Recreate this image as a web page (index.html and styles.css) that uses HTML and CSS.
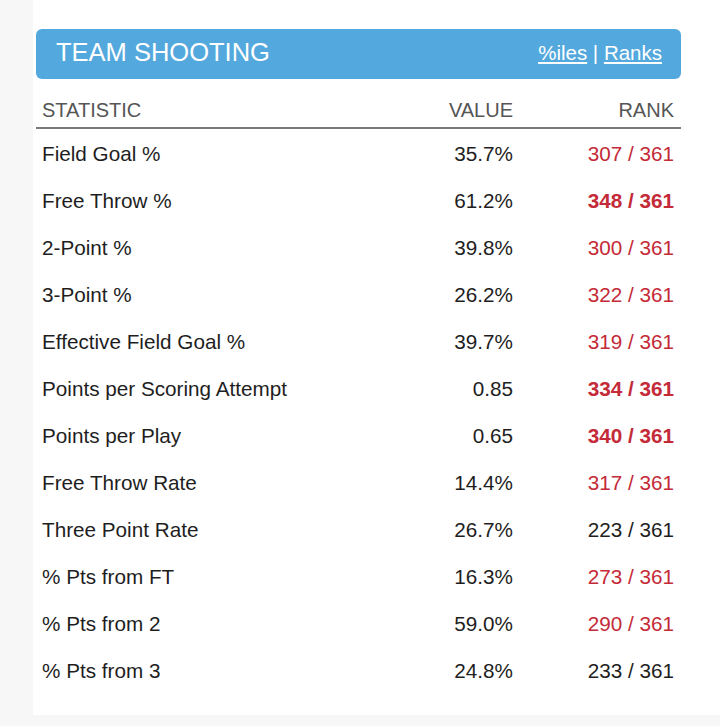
FILE: index.html
```html
<!DOCTYPE html>
<html>
<head>
<meta charset="utf-8">
<link rel="stylesheet" href="styles.css">
</head>
<body>
<div class="page">
  <div class="card">
    <div class="bar">
      <span class="title">TEAM SHOOTING</span>
      <span class="links"><a href="#">%iles</a> | <a href="#">Ranks</a></span>
    </div>
    <div class="table">
      <div class="row head">
        <div class="c stat">STATISTIC</div>
        <div class="c num">VALUE</div>
        <div class="c num">RANK</div>
      </div>
      <div class="row"><div class="c stat">Field Goal %</div><div class="c num">35.7%</div><div class="c num red">307 / 361</div></div>
      <div class="row"><div class="c stat">Free Throw %</div><div class="c num">61.2%</div><div class="c num red bold">348 / 361</div></div>
      <div class="row"><div class="c stat">2-Point %</div><div class="c num">39.8%</div><div class="c num red">300 / 361</div></div>
      <div class="row"><div class="c stat">3-Point %</div><div class="c num">26.2%</div><div class="c num red">322 / 361</div></div>
      <div class="row"><div class="c stat">Effective Field Goal %</div><div class="c num">39.7%</div><div class="c num red">319 / 361</div></div>
      <div class="row"><div class="c stat">Points per Scoring Attempt</div><div class="c num">0.85</div><div class="c num red bold">334 / 361</div></div>
      <div class="row"><div class="c stat">Points per Play</div><div class="c num">0.65</div><div class="c num red bold">340 / 361</div></div>
      <div class="row"><div class="c stat">Free Throw Rate</div><div class="c num">14.4%</div><div class="c num red">317 / 361</div></div>
      <div class="row"><div class="c stat">Three Point Rate</div><div class="c num">26.7%</div><div class="c num">223 / 361</div></div>
      <div class="row"><div class="c stat">% Pts from FT</div><div class="c num">16.3%</div><div class="c num red">273 / 361</div></div>
      <div class="row"><div class="c stat">% Pts from 2</div><div class="c num">59.0%</div><div class="c num red">290 / 361</div></div>
      <div class="row"><div class="c stat">% Pts from 3</div><div class="c num">24.8%</div><div class="c num">233 / 361</div></div>
    </div>
  </div>
</div>
</body>
</html>
```

FILE: styles.css
```css
html, body {
  margin: 0;
  padding: 0;
}
body {
  background: #f7f7f7;
  font-family: "Liberation Sans", Arial, Helvetica, sans-serif;
  color: #1e1e1e;
}
.page {
  padding-left: 33px;
  height: 726px;
  box-sizing: border-box;
}
.card {
  background: #ffffff;
  height: 715px;
  padding: 29px 39px 0 3px;
  box-sizing: border-box;
}
.bar {
  background: #53a8dd;
  border-radius: 6px;
  height: 50px;
  display: flex;
  align-items: center;
  justify-content: space-between;
  padding: 0 19px 0 20px;
  color: #ffffff;
}
.title {
  font-size: 25.5px;
  line-height: 1;
  padding-bottom: 2px;
}
.links {
  font-size: 20.5px;
  line-height: 1;
  padding-bottom: 2px;
}
.links a {
  color: #ffffff;
  text-decoration: underline;
  text-underline-offset: 2px;
}
.table {
  margin-top: 10px;
}
.row {
  display: grid;
  grid-template-columns: 1fr 150px 161px;
  height: 47px;
  align-items: center;
  font-size: 20.7px;
  padding-top: 4px;
  box-sizing: border-box;
}
.row.head {
  height: 40px;
  font-size: 20px;
  color: #555555;
  border-bottom: 2px solid #7a7a7a;
  padding-top: 4px;
}
.c {
  line-height: 1;
}
.stat {
  padding-left: 6px;
}
.num {
  text-align: right;
  padding-right: 7px;
}
.red {
  color: #c42a37;
}
.bold {
  font-weight: bold;
}
```
